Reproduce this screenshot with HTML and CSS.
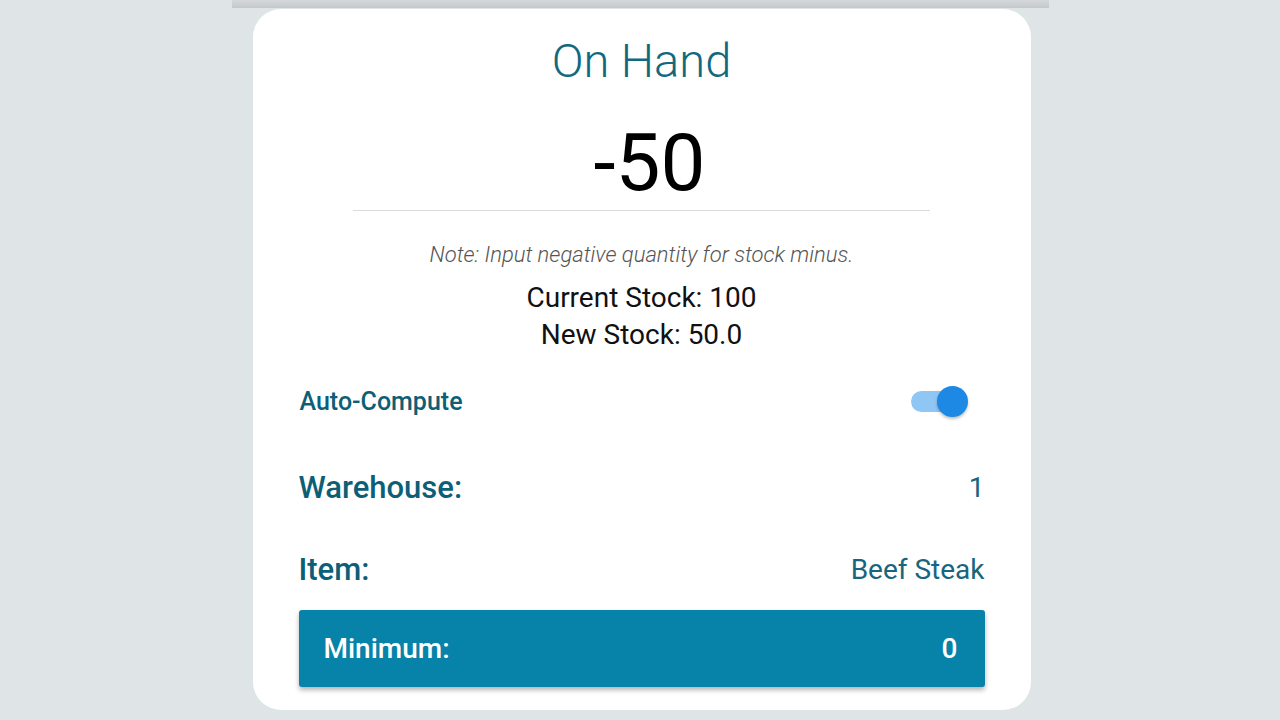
FILE: index.html
```html
<!DOCTYPE html>
<html lang="en">
<head>
    <meta charset="UTF-8">
    <meta name="viewport" content="width=device-width, initial-scale=1.0">
    <title>On Hand</title>
    <link rel="stylesheet" href="styles.css">
</head>
<body>

    <div class="screen">
        <div class="topbar"></div>

        <div class="card">
            <h1 class="title">On Hand</h1>

            <div class="qty">-50</div>

            <p class="note">Note: Input negative quantity for stock minus.</p>

            <div class="stock">
                <div>Current Stock: 100</div>
                <div>New Stock: 50.0</div>
            </div>

            <div class="switch-row">
                <span class="switch-label">Auto-Compute</span>
                <span class="switch on"></span>
            </div>

            <div class="field first">
                <span class="field-label">Warehouse:</span>
                <span class="field-value">1</span>
            </div>

            <div class="field">
                <span class="field-label">Item:</span>
                <span class="field-value">Beef Steak</span>
            </div>

            <div class="field total">
                <span class="field-label">Minimum:</span>
                <span class="field-value">0</span>
            </div>
        </div>
    </div>

</body>
</html>
```

FILE: styles.css
```css
body {
    margin: 0;
    background-color: #dfe4e7;
    font-family: Roboto, "Noto Sans", sans-serif;
}
.screen {
    width: 817px;
    height: 720px;
    margin: 0 auto;
}
.topbar {
    height: 8px;
    background: linear-gradient(#d4d8db, #c4c9cc);
}
.card {
    height: 701px;
    box-sizing: border-box;
    margin: 1px 18px 0 21px;
    padding: 25px 46px 0 46px;
    background-color: #fff;
    border-radius: 28px;
}
.title {
    margin: 0;
    font-size: 47px;
    font-weight: 300;
    line-height: 54px;
    text-align: center;
    color: #12697f;
}
.qty {
    width: 561px;
    height: 92px;
    margin: 30px auto 0;
    padding-left: 16px;
    border-bottom: 1px solid #dcdcdc;
    font-size: 80px;
    line-height: 90px;
    text-align: center;
    color: #000;
}
.note {
    margin: 32px 0 0;
    font-size: 22px;
    font-weight: 300;
    font-style: italic;
    line-height: 24px;
    text-align: center;
    color: #555;
}
.stock {
    margin-top: 12px;
    font-size: 28px;
    line-height: 37px;
    text-align: center;
    color: #111;
}
.switch-row {
    display: flex;
    align-items: center;
    justify-content: space-between;
    height: 40px;
    margin-top: 28px;
    padding: 0 17px 0 1px;
}
.switch-label {
    font-size: 25px;
    font-weight: 500;
    color: #0c5f77;
}
.switch {
    position: relative;
    width: 57px;
    height: 31px;
}
.switch::before {
    content: "";
    position: absolute;
    left: 0;
    top: 5px;
    width: 50px;
    height: 21px;
    border-radius: 11px;
    background-color: #90c6f4;
}
.switch::after {
    content: "";
    position: absolute;
    right: 0;
    top: 0;
    width: 31px;
    height: 31px;
    border-radius: 50%;
    background-color: #1e88e5;
    box-shadow: 0 2px 3px rgba(0, 0, 0, 0.25);
}
.field {
    display: flex;
    align-items: center;
    justify-content: space-between;
    height: 56px;
    margin-top: 26px;
}
.field.first {
    margin-top: 38px;
}
.field-label {
    font-size: 31px;
    font-weight: 500;
    color: #0c5f77;
}
.field-value {
    font-size: 28px;
    color: #17667e;
}
.field.total {
    height: 77px;
    margin-top: 13px;
    padding: 0 27px 0 25px;
    border-radius: 3px;
    background-color: #0782a8;
    box-shadow: 0 3px 5px rgba(0, 0, 0, 0.3);
}
.field.total .field-label {
    font-size: 28px;
    color: #fff;
}
.field.total .field-value {
    font-weight: 500;
    color: #fff;
}
```
